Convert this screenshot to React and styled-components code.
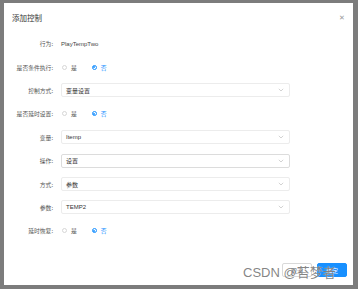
import React from 'react'
import styled, { createGlobalStyle } from 'styled-components'

const Global = createGlobalStyle`
  html, body { margin: 0; padding: 0; }
  body {
    background: #7c7c7c;
    font-family: "Liberation Sans", "Noto Sans CJK SC", sans-serif;
    width: 358px;
    height: 289px;
    overflow: hidden;
  }
`

const Overlay = styled.div`
  position: relative;
  padding: 3px 5px 4px 4px;
  height: 289px;
  box-sizing: border-box;
`

const Modal = styled.div`
  background: #fff;
  width: 349px;
  height: 282px;
  display: flex;
  flex-direction: column;
  box-sizing: border-box;
`

const Header = styled.div`
  height: 29px;
  display: flex;
  align-items: center;
  justify-content: space-between;
  padding: 0 8px 0 8px;
  box-sizing: border-box;
`

const Title = styled.span`
  font-size: 7.5px;
  color: #333;
  font-family: "Noto Sans CJK SC", sans-serif;
`

const Close = styled.span`
  font-size: 7px;
  color: #999;
  line-height: 1;
`

const Form = styled.div`
  display: flex;
  flex-direction: column;
`

const Row = styled.div`
  height: 23.4px;
  display: flex;
  align-items: center;
`

const Label = styled.div`
  width: 49px;
  text-align: right;
  font-size: 5.8px;
  color: #555;
  padding-right: 8px;
  font-family: "Noto Sans CJK SC", sans-serif;
`

const Value = styled.span`
  font-size: 6px;
  color: #444;
`

const RadioGroup = styled.div`
  display: flex;
  align-items: center;
  gap: 15px;
  padding-left: 1px;
`

const RadioItem = styled.label`
  display: flex;
  align-items: center;
  gap: 4px;
  font-size: 5.8px;
  color: ${({ checked }) => (checked ? '#1890ff' : '#555')};
  font-family: "Noto Sans CJK SC", sans-serif;
`

const Dot = styled.span`
  width: 5px;
  height: 5px;
  border-radius: 50%;
  box-sizing: border-box;
  border: ${({ checked }) => (checked ? '1.5px solid #1890ff' : '0.7px solid #d6d6d6')};
  background: #fff;
  display: flex;
  align-items: center;
  justify-content: center;
  &::after {
    content: '';
    width: 2px;
    height: 2px;
    border-radius: 50%;
    background: ${({ checked }) => (checked ? '#1890ff' : 'transparent')};
  }
`

const Select = styled.div`
  width: 229px;
  height: 14px;
  box-sizing: border-box;
  border: 1px solid ${({ active }) => (active ? '#dcdcdc' : '#ececec')};
  border-radius: 2px;
  display: flex;
  align-items: center;
  justify-content: space-between;
  padding: 0 5px 0 4px;
  font-size: 6px;
  color: #333;
  font-family: "Liberation Sans", "Noto Sans CJK SC", sans-serif;
`

const Footer = styled.div`
  margin-top: auto;
  display: flex;
  justify-content: flex-end;
  gap: 5px;
  padding: 0 6px 8px 0;
`

const Button = styled.button`
  width: 30px;
  height: 14px;
  border-radius: 2px;
  font-size: 6px;
  padding: 0;
  font-family: "Noto Sans CJK SC", sans-serif;
  border: 1px solid ${({ primary }) => (primary ? '#1890ff' : '#d9d9d9')};
  background: ${({ primary }) => (primary ? '#1890ff' : '#fff')};
  color: ${({ primary }) => (primary ? '#fff' : '#555')};
`

const Watermark = styled.div`
  position: absolute;
  left: 243px;
  top: 262px;
  font-size: 13px;
  color: rgba(110, 110, 110, 0.85);
  text-shadow: 0 0 1px rgba(255, 255, 255, 0.9);
  font-family: "Liberation Sans", "Noto Sans CJK SC", sans-serif;
  white-space: nowrap;
`

const Chevron = () => (
  <svg width="6" height="4" viewBox="0 0 6 4">
    <path d="M0.8 0.8 L3 3 L5.2 0.8" fill="none" stroke="#c0c0c0" strokeWidth="0.7" />
  </svg>
)

const Radios = ({ value }) => (
  <RadioGroup>
    <RadioItem checked={value === 'yes'}>
      <Dot checked={value === 'yes'} />是
    </RadioItem>
    <RadioItem checked={value === 'no'}>
      <Dot checked={value === 'no'} />否
    </RadioItem>
  </RadioGroup>
)

const rows = [
  { label: '行为:', text: 'PlayTempTwo' },
  { label: '是否条件执行:', radio: 'no' },
  { label: '控制方式:', select: '变量设置' },
  { label: '是否延时设置:', radio: 'no' },
  { label: '变量:', select: 'Itemp' },
  { label: '操作:', select: '设置', active: true },
  { label: '方式:', select: '参数' },
  { label: '参数:', select: 'TEMP2' },
  { label: '延时恢复:', radio: 'no' },
]

export default function App() {
  return (
    <>
      <Global />
      <Overlay>
        <Modal>
          <Header>
            <Title>添加控制</Title>
            <Close>✕</Close>
          </Header>
          <Form>
            {rows.map((r) => (
              <Row key={r.label}>
                <Label>{r.label}</Label>
                {r.text && <Value>{r.text}</Value>}
                {r.radio && <Radios value={r.radio} />}
                {r.select && (
                  <Select active={r.active}>
                    {r.select}
                    <Chevron />
                  </Select>
                )}
              </Row>
            ))}
          </Form>
          <Footer>
            <Button>取消</Button>
            <Button primary>确定</Button>
          </Footer>
        </Modal>
        <Watermark>CSDN @苔梦者</Watermark>
      </Overlay>
    </>
  )
}
